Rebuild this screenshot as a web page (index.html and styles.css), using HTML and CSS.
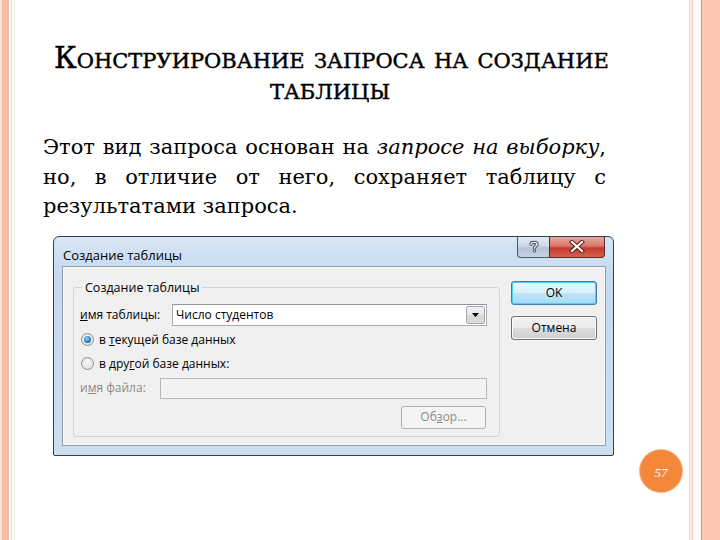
FILE: index.html
```html
<!DOCTYPE html>
<html lang="ru">
<head>
<meta charset="utf-8">
<title>Конструирование запроса на создание таблицы</title>
<link rel="stylesheet" href="styles.css">
</head>
<body>
<div class="slide">
  <div class="content">
    <h1 class="title">Конструирование запроса на создание<br>таблицы</h1>
    <p class="lead">Этот вид запроса основан на <em>запросе на выборку</em>, но, в отличие от него, сохраняет таблицу с результатами запроса.</p>

    <div class="dialog">
      <div class="titlebar">
        <span class="caption">Создание таблицы</span>
        <div class="capbtns">
          <span class="cb help">
            <svg width="12" height="13" viewBox="0 0 12 13"><path d="M3 4.2 C3 1.8 9 1.6 9 4.4 C9 6.2 6.4 6.4 6.4 8.2" fill="none" stroke="#3d4a5c" stroke-width="3.2" stroke-linecap="round"/><path d="M3 4.2 C3 1.8 9 1.6 9 4.4 C9 6.2 6.4 6.4 6.4 8.2" fill="none" stroke="#eef2f7" stroke-width="1.4" stroke-linecap="round"/><circle cx="6.4" cy="11" r="1.6" fill="#3d4a5c"/><circle cx="6.4" cy="11" r="0.8" fill="#eef2f7"/></svg>
          </span>
          <span class="cb close">
            <svg width="16" height="13" viewBox="0 0 16 13"><path d="M3 2 L13 11 M13 2 L3 11" stroke="#5a1a14" stroke-width="4.2" stroke-linecap="square"/><path d="M3 2 L13 11 M13 2 L3 11" stroke="#ffffff" stroke-width="2.2" stroke-linecap="square"/></svg>
          </span>
        </div>
      </div>
      <div class="client">
        <fieldset class="group">
          <legend>Создание таблицы</legend>
          <div class="row name-row">
            <span class="lbl name-lbl"><u>и</u>мя таблицы:</span>
            <div class="combo">
              <span class="combo-text">Число студентов</span>
              <span class="drop"><svg width="7" height="4" viewBox="0 0 7 4"><path d="M0 0 H7 L3.5 4 Z" fill="#000"/></svg></span>
            </div>
          </div>
          <div class="radio-row first">
            <span class="rb on"><span class="dot"></span></span>
            <span>в <u>т</u>екущей базе данных</span>
          </div>
          <div class="radio-row second">
            <span class="rb"></span>
            <span>в дру<u>г</u>ой базе данных:</span>
          </div>
          <div class="row file-row">
            <span class="lbl file-lbl dis">и<u>м</u>я файла:</span>
            <div class="textbox"></div>
          </div>
          <div class="row browse-row">
            <span class="btn disabled">Об<u>з</u>ор...</span>
          </div>
        </fieldset>
        <div class="side">
          <span class="btn default">OK</span>
          <span class="btn">Отмена</span>
        </div>
      </div>
    </div>
  </div>
  <div class="pagenum">57</div>
</div>
</body>
</html>
```

FILE: styles.css
```css
* { box-sizing: border-box; }
html, body { margin: 0; padding: 0; background: #fff; }

.slide {
  width: 720px;
  height: 540px;
  position: relative;
  overflow: hidden;
  padding: 43px 0 0 43px;
  background: linear-gradient(to right,
    #f9e2d9 0, #f9e2d9 2px, #f2b49b 2px, #f2b49b 3px, #fbbea5 3px, #fbbea5 9px,
    #ffffff 9px, #ffffff 11px, #e4deec 11px, #e4deec 12px, #ffffff 12px, #ffffff 14px,
    #f5f1d6 14px, #f5f1d6 15px, #ffffff 15px, #ffffff 689px,
    #efd3c6 689px, #efd3c6 690px, #fbeee2 690px, #fbeee2 692px, #ecc9b6 692px, #ecc9b6 693px,
    #fffaf5 693px, #fffaf5 701px, #f28b62 701px, #f28b62 702px, #fdc7b1 702px, #fdc7b1 720px);
}

.content { width: 563px; }

.title {
  margin: 0;
  padding-left: 11px;
  font-family: "DejaVu Serif", serif;
  font-size: 29.4px;
  line-height: 31px;
  font-weight: normal;
  font-variant: small-caps;
  text-align: center;
  color: #000;
  white-space: nowrap;
  -webkit-text-stroke: 0.45px #000;
}

.lead {
  margin: 28px 0 0;
  font-family: "DejaVu Serif", serif;
  font-size: 21px;
  line-height: 29.5px;
  text-align: justify;
  color: #000;
}
.lead em { font-style: italic; }

/* ---------- dialog ---------- */
.dialog {
  margin: 14px 0 0 10px;
  width: 561px;
  height: 220px;
  border: 1px solid #2f3e54;
  border-radius: 6px 6px 2px 2px;
  background: linear-gradient(to bottom, #d8e6f5 0, #c6d9ef 40px, #cddef1 100%);
  padding: 0 7px 9px 8px;
  display: flex;
  flex-direction: column;
  font-family: "Open Sans", "Noto Sans", sans-serif;
  font-size: 12px;
  color: #000;
}

.titlebar {
  height: 29px;
  display: flex;
  justify-content: space-between;
  align-items: flex-start;
}
.caption {
  padding: 10px 0 0 1px;
  line-height: 16px;
  font-size: 13px;
  color: #000;
}
.capbtns {
  display: flex;
  margin-right: 1px;
}
.cb {
  height: 21px;
  display: flex;
  align-items: center;
  justify-content: center;
  border: 1px solid #4c5a6e;
  border-top: none;
}
.help {
  width: 32px;
  border-radius: 0 0 0 4px;
  background: linear-gradient(to bottom, #e2e9f2 0, #cdd8e5 45%, #b3c3d6 55%, #c5d3e3 100%);
  border-right: none;
}
.close {
  width: 56px;
  border-radius: 0 0 4px 0;
  background: linear-gradient(to bottom, #e8a89d 0, #d8776a 45%, #c43a2e 55%, #d4604f 100%);
  border-color: #5b2a2a;
}

.client {
  flex: 1;
  background: #f0f0f0;
  border: 1px solid #8e9cb0;
  box-shadow: inset 0 0 0 1px #f7f9fb;
  display: flex;
  padding: 0 8px 0 10px;
}

.group {
  margin: 13px 0 0 0;
  width: 427px;
  height: 157px;
  border: 1px solid #cdd6dc;
  border-radius: 3px;
  padding: 0 12px 7px 6px;
  min-width: 0;
}
.group legend {
  margin-left: 2px;
  padding: 0 3px;
  line-height: 16px;
  font-size: 12.5px;
}

.row {
  display: flex;
  align-items: center;
}
.name-row { margin-top: 8px; height: 22px; }
.lbl { line-height: 16px; }
.name-lbl { width: 92px; }
.combo {
  flex: 1;
  height: 22px;
  background: #fff;
  border: 1px solid #abadb3;
  border-top-color: #8f959c;
  display: flex;
  align-items: center;
  justify-content: space-between;
  padding: 0 1px 0 3px;
}
.combo-text { line-height: 16px; }
.drop {
  width: 19px;
  height: 18px;
  border: 1px solid #a5a9af;
  border-radius: 2px;
  background: linear-gradient(to bottom, #f2f2f2 0, #e6e6e6 50%, #d6d6d6 51%, #dcdcdc 100%);
  display: flex;
  align-items: center;
  justify-content: center;
}

.radio-row {
  display: flex;
  align-items: center;
  height: 18px;
  line-height: 16px;
}
.radio-row.first { margin-top: 5px; }
.radio-row.second { margin-top: 6px; }
.rb {
  width: 13px;
  height: 13px;
  border-radius: 50%;
  border: 1px solid #8c8e90;
  background: radial-gradient(circle at 50% 40%, #f6f6f6 0, #dcdcdc 100%);
  margin: 0 5px 0 1px;
  display: flex;
  align-items: center;
  justify-content: center;
}
.rb .dot {
  width: 7px;
  height: 7px;
  border-radius: 50%;
  background: radial-gradient(circle at 40% 35%, #9ad6fb 0, #2f7cc8 55%, #1b4f8c 100%);
}

.file-row { margin-top: 5px; height: 21px; }
.file-lbl { width: 80px; }
.dis { color: #8a8a8a; }
.textbox {
  flex: 1;
  height: 21px;
  border: 1px solid #b6b9bd;
  background: #f3f3f3;
}

.browse-row {
  margin-top: 7px;
  justify-content: flex-end;
  padding-right: 1px;
}

.btn {
  width: 86px;
  height: 24px;
  display: flex;
  align-items: center;
  justify-content: center;
  border: 1px solid #707070;
  border-radius: 3px;
  background: linear-gradient(to bottom, #f2f2f2 0, #ebebeb 50%, #dddddd 51%, #cfcfcf 100%);
  box-shadow: inset 0 0 0 1px #fbfbfb;
  line-height: 16px;
}
.btn.disabled {
  width: 85px;
  height: 23px;
  border-color: #adb2b5;
  background: #f4f4f4;
  box-shadow: none;
  color: #8a8a8a;
}
.btn.default {
  border-color: #3c7fb1;
  background: linear-gradient(to bottom, #eaf6fd 0, #d9f0fc 50%, #bee6fd 51%, #a7d9f5 100%);
  box-shadow: inset 0 0 0 1px #48d2f6;
}

.side {
  margin: 14px 0 0 11px;
  display: flex;
  flex-direction: column;
  gap: 11px;
}

/* ---------- page number badge ---------- */
.pagenum {
  position: absolute;
  left: 640px;
  top: 450px;
  width: 42px;
  height: 42px;
  border-radius: 50%;
  background: #f5873b;
  box-shadow: 0 0 0 1px #f9b27f;
  color: #fff;
  display: flex;
  align-items: center;
  justify-content: center;
  font-family: "Liberation Serif", serif;
  font-style: italic;
  font-size: 13px;
  padding-top: 3px;
}
```
